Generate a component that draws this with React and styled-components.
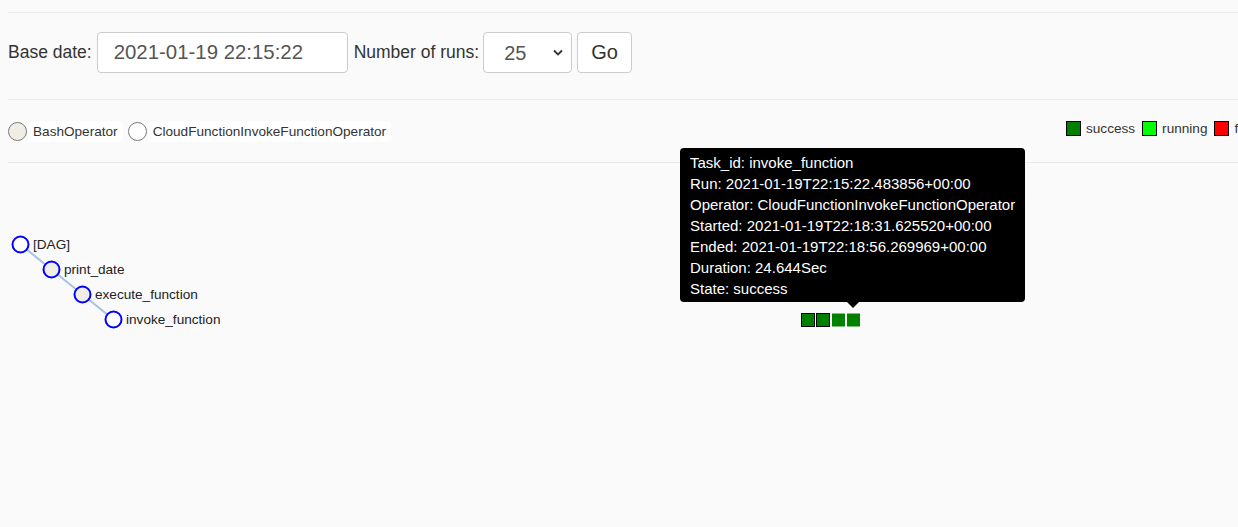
import React from "react";
import styled, { createGlobalStyle } from "styled-components";

const GlobalStyle = createGlobalStyle`
  html, body {
    margin: 0;
    padding: 0;
    background: #fafafa;
    overflow: hidden;
    font-family: "Liberation Sans", Arial, sans-serif;
    color: #333;
  }
`;

const Page = styled.div`
  width: 100%;
  height: 527px;
  display: flex;
  flex-direction: column;
`;

const Header = styled.div`
  padding-left: 8px;
  display: flex;
  flex-direction: column;
`;

const Divider = styled.div`
  height: 1px;
  background: #e9e9e9;
  margin-top: ${(p) => p.$top || 0}px;
`;

const Form = styled.form`
  margin-top: 19px;
  height: 41px;
  display: flex;
  align-items: center;
  font-size: 17.5px;
`;

const Label = styled.label`
  color: #333;
  margin-right: ${(p) => p.$gap}px;
  white-space: nowrap;
`;

const TextInput = styled.input`
  box-sizing: border-box;
  width: 251px;
  height: 41px;
  border: 1px solid #ccc;
  border-radius: 4px;
  background: #fff;
  padding: 0 0 0 16px;
  font: 20.4px "Liberation Sans", Arial, sans-serif;
  color: #555;
  margin-right: 6px;
  outline: none;
`;

const SelectWrap = styled.div`
  position: relative;
  width: 89px;
  height: 41px;
  margin-right: 5px;
`;

const Select = styled.select`
  appearance: none;
  box-sizing: border-box;
  width: 100%;
  height: 100%;
  border: 1px solid #ccc;
  border-radius: 4px;
  background: #fff;
  padding: 0 0 0 20px;
  font: 20px "Liberation Sans", Arial, sans-serif;
  color: #555;
  outline: none;
`;

const Chevron = styled.svg`
  position: absolute;
  right: 9px;
  top: 17px;
  pointer-events: none;
`;

const Button = styled.button`
  box-sizing: border-box;
  width: 55px;
  height: 41px;
  border: 1px solid #ccc;
  border-radius: 4px;
  background: #fff;
  font: 20px "Liberation Sans", Arial, sans-serif;
  color: #333;
  padding: 0;
`;

const FilterRow = styled.div`
  height: 62px;
  display: flex;
  align-items: center;
`;

const OperatorList = styled.div`
  display: flex;
  align-items: center;
  gap: 5px;
  margin-top: 1px;
`;

const Operator = styled.div`
  display: flex;
  align-items: center;
  gap: 1px;
`;

const Swatch = styled.span`
  box-sizing: border-box;
  width: 19px;
  height: 19px;
  border-radius: 50%;
  border: 1px solid #7a7a7a;
  background: ${(p) => p.$color};
`;

const OperatorName = styled.span`
  background: #fff;
  border-radius: 5px;
  padding: 0 5px;
  height: 21px;
  line-height: 21px;
  font-size: 13.6px;
  color: #333;
`;

const StateLegend = styled.div`
  margin-left: auto;
  width: 172px;
  min-width: 0;
  flex: 0 0 172px;
  display: flex;
  align-items: center;
  white-space: nowrap;
  margin-top: -5px;
`;

const StateItem = styled.div`
  display: flex;
  align-items: center;
  flex: 0 0 auto;
  margin-right: 7px;
  font-size: 13.6px;
  color: #333;
`;

const StateBox = styled.span`
  box-sizing: border-box;
  width: 15px;
  height: 15px;
  border: 1px solid #000;
  background: ${(p) => p.$color};
  margin-right: 5px;
`;

const Canvas = styled.div`
  position: relative;
  flex: 1;
`;

const Tree = styled.svg`
  display: block;
`;

const NodeLabel = styled.text`
  font-family: "Liberation Sans", Arial, sans-serif;
  font-size: 13.6px;
  fill: #222;
`;

const Tooltip = styled.div`
  position: absolute;
  left: 680px;
  top: -15px;
  background: #000;
  color: #fff;
  border-radius: 4px;
  padding: 4px 10px 3px 10px;
  font-size: 15px;
  line-height: 21px;
  white-space: nowrap;

  &::after {
    content: "";
    position: absolute;
    left: 50%;
    bottom: -6px;
    margin-left: -6px;
    border-left: 6px solid transparent;
    border-right: 6px solid transparent;
    border-top: 6px solid #000;
  }
`;

const TooltipLine = styled.div``;

const nodes = [
  { x: 20.5, y: 81.5, name: "[DAG]", fill: "#fff" },
  { x: 51.5, y: 106.5, name: "print_date", fill: "#f0ede4" },
  { x: 82.5, y: 131.5, name: "execute_function", fill: "#f0ede4" },
  { x: 113.5, y: 156.5, name: "invoke_function", fill: "#fff" },
];

const squares = [
  { x: 801.5, border: true },
  { x: 816.5, border: true },
  { x: 832, border: false },
  { x: 847, border: false },
];

const tooltipLines = [
  "Task_id: invoke_function",
  "Run: 2021-01-19T22:15:22.483856+00:00",
  "Operator: CloudFunctionInvokeFunctionOperator",
  "Started: 2021-01-19T22:18:31.625520+00:00",
  "Ended: 2021-01-19T22:18:56.269969+00:00",
  "Duration: 24.644Sec",
  "State: success",
];

export default function App() {
  return (
    <Page>
      <GlobalStyle />
      <Header>
        <Divider $top={12} />
        <Form onSubmit={(e) => e.preventDefault()}>
          <Label $gap={5}>Base date:</Label>
          <TextInput defaultValue="2021-01-19 22:15:22" />
          <Label $gap={4}>Number of runs:</Label>
          <SelectWrap>
            <Select defaultValue="25">
              <option value="5">5</option>
              <option value="25">25</option>
              <option value="50">50</option>
              <option value="100">100</option>
            </Select>
            <Chevron width="10" height="7" viewBox="0 0 10 7">
              <path d="M1 1.5 L5 5.5 L9 1.5" fill="none" stroke="#333" strokeWidth="1.8" />
            </Chevron>
          </SelectWrap>
          <Button type="submit">Go</Button>
        </Form>
        <Divider $top={26} />
        <FilterRow>
          <OperatorList>
            <Operator>
              <Swatch $color="#f0ede4" />
              <OperatorName>BashOperator</OperatorName>
            </Operator>
            <Operator>
              <Swatch $color="#fff" />
              <OperatorName>CloudFunctionInvokeFunctionOperator</OperatorName>
            </Operator>
          </OperatorList>
          <StateLegend>
            <StateItem>
              <StateBox $color="#008000" />
              success
            </StateItem>
            <StateItem>
              <StateBox $color="#00ff00" />
              running
            </StateItem>
            <StateItem>
              <StateBox $color="#ff0000" />
              failed
            </StateItem>
          </StateLegend>
        </FilterRow>
        <Divider />
      </Header>
      <Canvas>
        <Tree width="1238" height="364">
          {nodes.slice(1).map((n, i) => (
            <line
              key={"l" + i}
              x1={nodes[i].x}
              y1={nodes[i].y}
              x2={n.x}
              y2={n.y}
              stroke="#a4c3df"
              strokeWidth="2"
            />
          ))}
          {nodes.map((n) => (
            <g key={n.name}>
              <circle cx={n.x} cy={n.y} r="8" fill={n.fill} stroke="#0000ff" strokeWidth="2" />
              <NodeLabel x={n.x + 12.5} y={n.y + 4.5}>
                {n.name}
              </NodeLabel>
            </g>
          ))}
          {squares.map((s, i) => (
            <rect
              key={"s" + i}
              x={s.x}
              y={150.5}
              width="13"
              height="13"
              fill="#008000"
              stroke={s.border ? "#000" : "none"}
              strokeWidth="1"
            />
          ))}
        </Tree>
        <Tooltip>
          {tooltipLines.map((t) => (
            <TooltipLine key={t}>{t}</TooltipLine>
          ))}
        </Tooltip>
      </Canvas>
    </Page>
  );
}
